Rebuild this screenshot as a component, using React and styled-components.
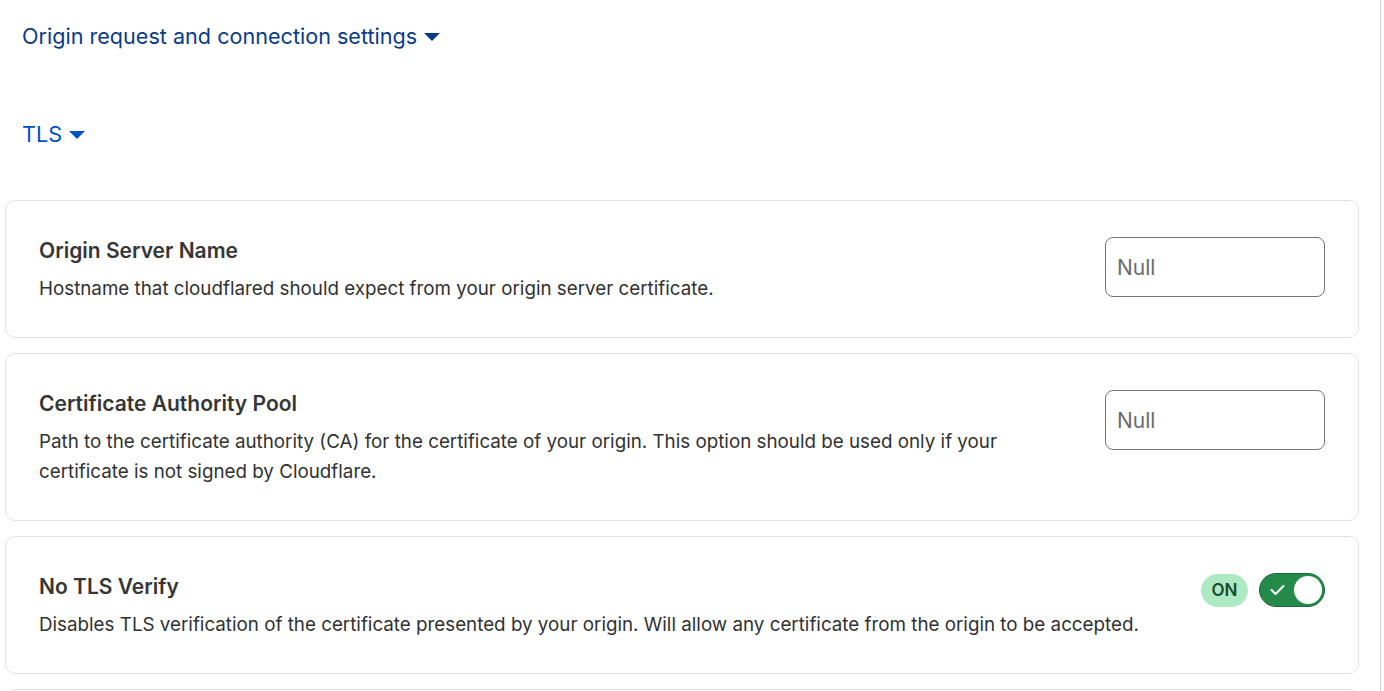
import React, { useState } from "react";
import styled, { createGlobalStyle } from "styled-components";

const GlobalStyle = createGlobalStyle`
  html, body {
    margin: 0;
    padding: 0;
    background: #ffffff;
  }
  body {
    font-family: Inter, "Noto Sans", "Liberation Sans", sans-serif;
    color: #313131;
  }
`;

const settings = [
  {
    id: "originServerName",
    title: "Origin Server Name",
    desc: "Hostname that cloudflared should expect from your origin server certificate.",
    kind: "input",
  },
  {
    id: "caPool",
    title: "Certificate Authority Pool",
    desc: "Path to the certificate authority (CA) for the certificate of your origin. This option should be used only if your certificate is not signed by Cloudflare.",
    kind: "input",
    narrow: true,
  },
  {
    id: "noTLSVerify",
    title: "No TLS Verify",
    desc: "Disables TLS verification of the certificate presented by your origin. Will allow any certificate from the origin to be accepted.",
    kind: "toggle",
  },
];

const Caret = () => (
  <svg width="16" height="8" viewBox="0 0 16 8">
    <path d="M0 0 L16 0 L8 8 Z" fill="currentColor" />
  </svg>
);

const Check = () => (
  <svg width="15" height="12" viewBox="0 0 15 12">
    <path
      d="M1.5 6 L5.5 10 L13.5 2"
      fill="none"
      stroke="#ffffff"
      strokeWidth="2"
      strokeLinecap="round"
      strokeLinejoin="round"
    />
  </svg>
);

const App = () => {
  const [values, setValues] = useState({ originServerName: "", caPool: "" });
  const [noVerify, setNoVerify] = useState(true);

  const renderControl = (s) => {
    if (s.kind === "toggle") {
      return (
        <ToggleWrap>
          <StateBadge on={noVerify}>{noVerify ? "ON" : "OFF"}</StateBadge>
          <Switch on={noVerify} onClick={() => setNoVerify(!noVerify)}>
            {noVerify && <Check />}
            <Knob on={noVerify} />
          </Switch>
        </ToggleWrap>
      );
    }
    return (
      <TextInput
        placeholder="Null"
        value={values[s.id]}
        onChange={(e) => setValues({ ...values, [s.id]: e.target.value })}
      />
    );
  };

  return (
    <Page>
      <GlobalStyle />
      <Main>
        <SectionToggle dark>
          Origin request and connection settings <Caret />
        </SectionToggle>
        <SectionToggle>
          TLS <Caret />
        </SectionToggle>
        <CardList>
          {settings.map((s) => (
            <Card key={s.id}>
              <CardText narrow={s.narrow}>
                <CardTitle>{s.title}</CardTitle>
                <CardDesc>{s.desc}</CardDesc>
              </CardText>
              {renderControl(s)}
            </Card>
          ))}
          <Card empty />
        </CardList>
      </Main>
    </Page>
  );
};

export default App;

// STYLED CSS

const Page = styled.div`
  display: flex;
  width: 1384px;
  height: 691px;
  overflow: hidden;
`;

const Main = styled.div`
  width: 1354px;
  padding: 0 21px 0 5px;
  border-right: 1px solid #d4d4d4;
`;

const SectionToggle = styled.div`
  display: flex;
  align-items: center;
  gap: 7px;
  height: 98px;
  padding-left: 17px;
  margin-top: ${(p) => (p.dark ? "-13px" : "0")};
  font-size: 21.6px;
  color: ${(p) => (p.dark ? "#0a3b87" : "#0051c3")};
  cursor: pointer;

  svg {
    margin-top: 2px;
  }
`;

const CardList = styled.div`
  display: flex;
  flex-direction: column;
  gap: 15px;
  margin-top: 17px;
`;

const Card = styled.div`
  display: flex;
  justify-content: space-between;
  align-items: flex-start;
  min-height: ${(p) => (p.empty ? "100px" : "0")};
  padding: 36px 33px 33px 33px;
  border: 1px solid #e2e2e2;
  border-radius: 10px;
  background: #ffffff;
`;

const CardText = styled.div`
  display: flex;
  flex-direction: column;
  gap: 9px;
  max-width: ${(p) => (p.narrow ? "1000px" : "none")};
`;

const CardTitle = styled.div`
  font-size: 21px;
  font-weight: 600;
  line-height: 28px;
  color: #363636;
`;

const CardDesc = styled.div`
  font-size: 18.8px;
  line-height: 30px;
  color: #313131;
`;

const TextInput = styled.input`
  box-sizing: border-box;
  width: 220px;
  height: 60px;
  padding: 0 11px;
  border: 1px solid #757575;
  border-radius: 8px;
  font-family: Inter, "Noto Sans", "Liberation Sans", sans-serif;
  font-size: 21px;
  color: #313131;
  outline: none;

  &::placeholder {
    color: #6b6b6b;
  }
`;

const ToggleWrap = styled.div`
  display: flex;
  align-items: center;
  gap: 11px;
`;

const StateBadge = styled.span`
  display: inline-flex;
  align-items: center;
  justify-content: center;
  width: 47px;
  height: 33px;
  border-radius: 17px;
  background: ${(p) => (p.on ? "#ade9c3" : "#e5e5e5")};
  color: ${(p) => (p.on ? "#1a4a2c" : "#444")};
  font-size: 17px;
  font-weight: 600;
`;

const Switch = styled.button`
  position: relative;
  display: flex;
  align-items: center;
  box-sizing: border-box;
  width: 66px;
  height: 34px;
  padding: 0 0 0 10px;
  border: 1px solid ${(p) => (p.on ? "#1b6a37" : "#8a8a8a")};
  border-radius: 17px;
  background: ${(p) => (p.on ? "#248a4a" : "#bdbdbd")};
  cursor: pointer;
`;

const Knob = styled.span`
  position: absolute;
  top: 2px;
  left: ${(p) => (p.on ? "34px" : "2px")};
  width: 28px;
  height: 28px;
  border-radius: 50%;
  background: #ffffff;
`;
